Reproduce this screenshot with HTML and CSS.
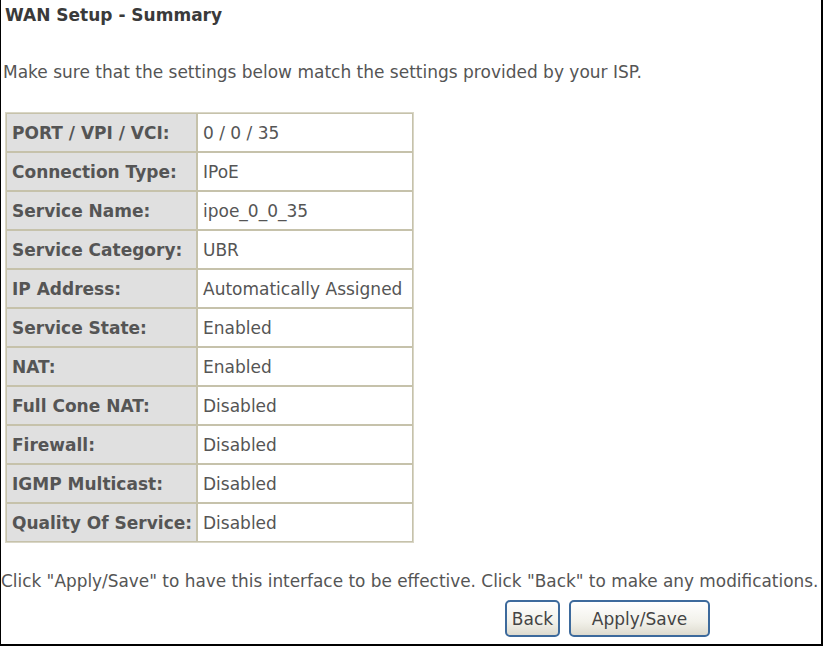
FILE: index.html
```html
<!DOCTYPE html>
<html>
<head>
<meta charset="utf-8">
<link rel="stylesheet" href="styles.css">
</head>
<body>
<div class="frame">
  <div class="title">WAN Setup - Summary</div>
  <p class="intro">Make sure that the settings below match the settings provided by your ISP.</p>
  <table class="summary">
    <tr><td class="lbl">PORT / VPI / VCI:</td><td class="val">0 / 0 / 35</td></tr>
    <tr><td class="lbl">Connection Type:</td><td class="val">IPoE</td></tr>
    <tr><td class="lbl">Service Name:</td><td class="val">ipoe_0_0_35</td></tr>
    <tr><td class="lbl">Service Category:</td><td class="val">UBR</td></tr>
    <tr><td class="lbl">IP Address:</td><td class="val">Automatically Assigned</td></tr>
    <tr><td class="lbl">Service State:</td><td class="val">Enabled</td></tr>
    <tr><td class="lbl">NAT:</td><td class="val">Enabled</td></tr>
    <tr><td class="lbl">Full Cone NAT:</td><td class="val">Disabled</td></tr>
    <tr><td class="lbl">Firewall:</td><td class="val">Disabled</td></tr>
    <tr><td class="lbl">IGMP Multicast:</td><td class="val">Disabled</td></tr>
    <tr><td class="lbl">Quality Of Service:</td><td class="val">Disabled</td></tr>
  </table>
  <p class="outro">Click "Apply/Save" to have this interface to be effective. Click "Back" to make any modifications.</p>
  <div class="actions">
    <button class="btn btn-back">Back</button>
    <button class="btn btn-apply">Apply/Save</button>
  </div>
</div>
</body>
</html>
```

FILE: styles.css
```css
html, body {
  margin: 0;
  padding: 0;
  background: #ffffff;
}
.frame {
  box-sizing: border-box;
  width: 823px;
  height: 646px;
  border-left: 1px solid #000;
  border-right: 2px solid #000;
  border-bottom: 2px solid #000;
  font-family: "DejaVu Sans", Verdana, sans-serif;
  font-size: 17px;
  color: #555555;
  overflow: hidden;
}
.title {
  font-weight: bold;
  color: #3a3a3a;
  margin: 5px 0 0 4px;
  line-height: 20px;
}
.intro {
  margin: 36px 0 0 2px;
  line-height: 22px;
}
.summary {
  margin: 29px 0 0 4px;
  border-collapse: separate;
  border-spacing: 0;
  border: 1px solid #d9d6c6;
}
.summary td {
  height: 37px;
  padding: 0 0 0 5px;
  border: 1px solid #c6c2ab;
  white-space: nowrap;
}
.summary .lbl {
  width: 184px;
  background: #e0e0e0;
  font-weight: bold;
  color: #555555;
}
.summary .val {
  width: 209px;
  background: #ffffff;
}
.outro {
  margin: 27px 0 0 0;
  line-height: 22px;
  font-size: 16.9px;
  white-space: nowrap;
}
.actions {
  display: flex;
  gap: 9px;
  margin: 8px 0 0 504px;
}
.btn {
  box-sizing: border-box;
  height: 37px;
  border: 2px solid #3d6a9c;
  border-radius: 5px;
  background: linear-gradient(#ffffff, #f2f1ea 60%, #dedbcf);
  font-family: "DejaVu Sans", Verdana, sans-serif;
  font-size: 17px;
  color: #444444;
  padding: 0;
}
.btn-back {
  width: 55px;
}
.btn-apply {
  width: 141px;
}
```
